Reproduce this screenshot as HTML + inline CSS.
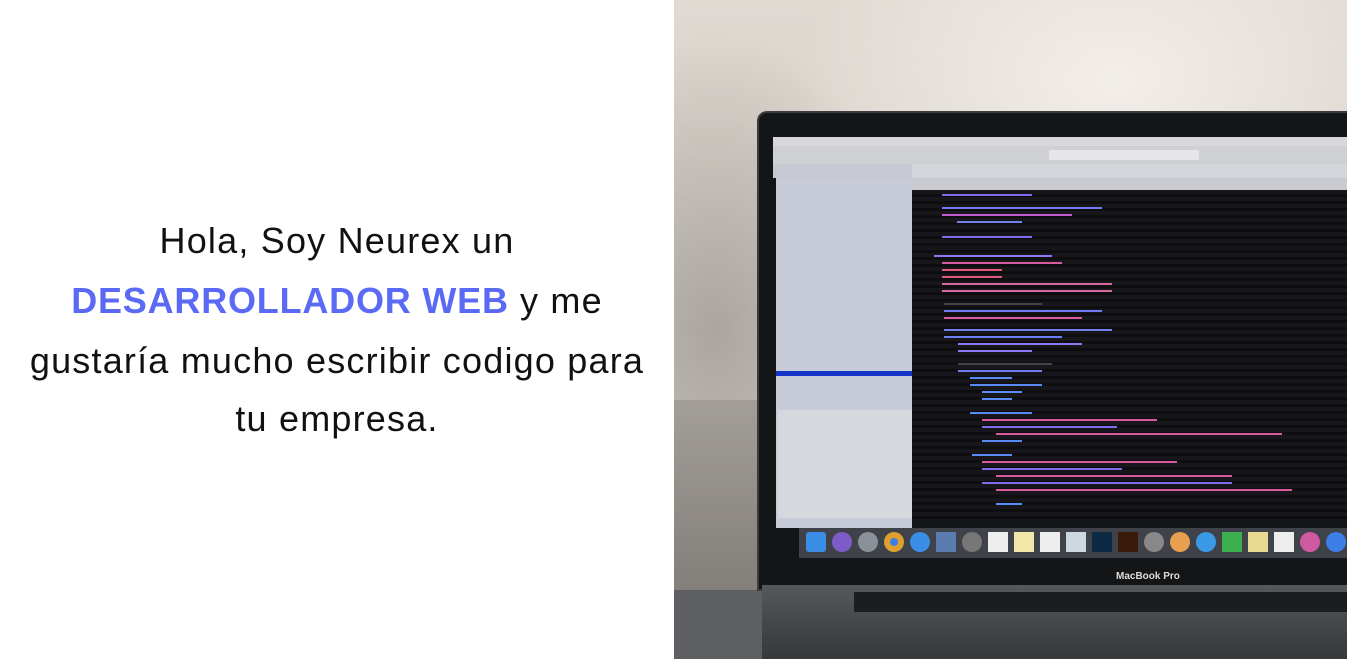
<!DOCTYPE html>
<html><head><meta charset="utf-8"><style>
*{margin:0;padding:0;box-sizing:border-box}
body{width:1347px;height:659px;overflow:hidden;background:#fff;position:relative;font-family:"Liberation Sans",sans-serif}
.left{position:absolute;left:0;top:0;width:674px;height:659px;background:#fff}
.t{position:absolute;left:0;width:674px;text-align:center;font-size:36px;color:#111;letter-spacing:1.2px;white-space:nowrap}
.b{color:#5b6af5;font-weight:bold;letter-spacing:0.8px}
.photo{position:absolute;left:674px;top:0;width:673px;height:659px;overflow:hidden;
background:radial-gradient(ellipse 320px 220px at 440px 80px,#f3eee9,transparent),
radial-gradient(ellipse 200px 300px at 40px 330px,#aaa59f,transparent),
linear-gradient(180deg,#e0d9d2 0%,#d5cec7 60%,#bdb7b1 100%)}
.abs{position:absolute}
</style></head><body>
<div class="left">
<div class="t" style="top:220px">Hola, Soy Neurex un</div>
<div class="t" style="top:280px"><span class="b">DESARROLLADOR WEB</span> y me</div>
<div class="t" style="top:340px">gustaría mucho escribir codigo para</div>
<div class="t" style="top:398px">tu empresa.</div>
</div>
<div class="photo">
<div class="abs" style="left:0;top:400px;width:90px;height:259px;background:linear-gradient(180deg,#a39e98,#77736f)"></div>
<div class="abs" style="left:0;top:590px;width:673px;height:69px;background:#5d5f62"></div>
<div class="abs" style="left:83px;top:111px;width:600px;height:480px;background:#141516;border-radius:10px 0 0 0;border:2px solid #3a3c3e"></div>
<div class="abs" style="left:88px;top:585px;width:600px;height:74px;background:linear-gradient(180deg,#55585c,#36383b)"></div>
<div class="abs" style="left:180px;top:592px;width:500px;height:20px;background:#1c1d1f"></div>
<div class="abs" style="left:442px;top:571px;font-size:10px;color:#ddd;font-weight:bold">MacBook Pro</div>
<div class="abs" style="left:99px;top:137px;width:574px;height:9px;background:#d8d8dc"></div>
<div class="abs" style="left:99px;top:146px;width:574px;height:18px;background:#cfd0d4"></div>
<div class="abs" style="left:375px;top:150px;width:150px;height:10px;background:#e6e6ea"></div>
<div class="abs" style="left:99px;top:164px;width:139px;height:14px;background:#c6c9d2"></div>
<div class="abs" style="left:238px;top:164px;width:435px;height:14px;background:#d3d5db"></div>
<div class="abs" style="left:102px;top:178px;width:136px;height:350px;background:#c8ccd8"></div>
<div class="abs" style="left:102px;top:371px;width:140px;height:5px;background:#1536c8"></div>
<div class="abs" style="left:104px;top:410px;width:138px;height:108px;background:#d6d8de"></div>
<div class="abs" style="left:238px;top:178px;width:435px;height:12px;background:#c9cbd1"></div>
<div class="abs" style="left:238px;top:190px;width:435px;height:330px;background:#17171b;
background-image:repeating-linear-gradient(180deg,transparent 0 4px,rgba(0,0,0,.4) 4px 7px);"></div>
<svg class="abs" style="left:238px;top:190px" width="435" height="330">
<g stroke-width="2">
<line x1="30" y1="5" x2="120" y2="5" stroke="#7b6cf0"/>
<line x1="30" y1="18" x2="190" y2="18" stroke="#6e7cf5"/>
<line x1="30" y1="25" x2="160" y2="25" stroke="#c55ad5"/>
<line x1="45" y1="32" x2="110" y2="32" stroke="#7482f0"/>
<line x1="30" y1="47" x2="120" y2="47" stroke="#7b6cf0"/>
<line x1="22" y1="66" x2="140" y2="66" stroke="#8a7af5"/>
<line x1="30" y1="73" x2="150" y2="73" stroke="#d85aa0"/>
<line x1="30" y1="80" x2="90" y2="80" stroke="#e05a7a"/>
<line x1="30" y1="87" x2="90" y2="87" stroke="#e05a7a"/>
<line x1="30" y1="94" x2="200" y2="94" stroke="#d46aa0"/>
<line x1="30" y1="101" x2="200" y2="101" stroke="#d46aa0"/>
<line x1="32" y1="114" x2="130" y2="114" stroke="#444"/>
<line x1="32" y1="121" x2="190" y2="121" stroke="#6e7cf5"/>
<line x1="32" y1="128" x2="170" y2="128" stroke="#d85aa0"/>
<line x1="32" y1="140" x2="200" y2="140" stroke="#7482f0"/>
<line x1="32" y1="147" x2="150" y2="147" stroke="#6e7cf5"/>
<line x1="46" y1="154" x2="170" y2="154" stroke="#8a7af5"/>
<line x1="46" y1="161" x2="120" y2="161" stroke="#8a7af5"/>
<line x1="46" y1="174" x2="140" y2="174" stroke="#444"/>
<line x1="46" y1="181" x2="130" y2="181" stroke="#6e7cf5"/>
<line x1="58" y1="188" x2="100" y2="188" stroke="#5a8af5"/>
<line x1="58" y1="195" x2="130" y2="195" stroke="#5a8af5"/>
<line x1="70" y1="202" x2="110" y2="202" stroke="#5a8af5"/>
<line x1="70" y1="209" x2="100" y2="209" stroke="#5a8af5"/>
<line x1="58" y1="223" x2="120" y2="223" stroke="#5a8af5"/>
<line x1="70" y1="230" x2="245" y2="230" stroke="#d85aa0"/>
<line x1="70" y1="237" x2="205" y2="237" stroke="#7b6cf0"/>
<line x1="84" y1="244" x2="370" y2="244" stroke="#d85aa0"/>
<line x1="70" y1="251" x2="110" y2="251" stroke="#5a8af5"/>
<line x1="60" y1="265" x2="100" y2="265" stroke="#5a8af5"/>
<line x1="70" y1="272" x2="265" y2="272" stroke="#d85aa0"/>
<line x1="70" y1="279" x2="210" y2="279" stroke="#7b6cf0"/>
<line x1="84" y1="286" x2="320" y2="286" stroke="#d85aa0"/>
<line x1="70" y1="293" x2="320" y2="293" stroke="#7b6cf0"/>
<line x1="84" y1="300" x2="380" y2="300" stroke="#d85aa0"/>
<line x1="84" y1="314" x2="110" y2="314" stroke="#5a8af5"/>
</g></svg>
<div class="abs" style="left:125px;top:528px;width:548px;height:30px;background:#3f4248"></div>
<svg class="abs" style="left:130px;top:530px" width="545" height="26">
<g>
<rect x="2" y="2" width="20" height="20" rx="3" fill="#3a8ee6"/>
<circle cx="38" cy="12" r="10" fill="#7e5cc8"/>
<circle cx="64" cy="12" r="10" fill="#8a9098"/>
<circle cx="90" cy="12" r="10" fill="#e0a030"/><circle cx="90" cy="12" r="4" fill="#3a7ee6"/>
<circle cx="116" cy="12" r="10" fill="#3a8ee6"/>
<rect x="132" y="2" width="20" height="20" fill="#5a7cb0"/>
<circle cx="168" cy="12" r="10" fill="#777"/>
<rect x="184" y="2" width="20" height="20" fill="#eee"/>
<rect x="210" y="2" width="20" height="20" fill="#f2e7a8"/>
<rect x="236" y="2" width="20" height="20" fill="#eee"/>
<rect x="262" y="2" width="20" height="20" fill="#ccd8e0"/>
<rect x="288" y="2" width="20" height="20" fill="#0c2a44"/>
<rect x="314" y="2" width="20" height="20" fill="#3a1a08"/>
<circle cx="350" cy="12" r="10" fill="#888"/>
<circle cx="376" cy="12" r="10" fill="#e8a050"/>
<circle cx="402" cy="12" r="10" fill="#3a9ae6"/>
<rect x="418" y="2" width="20" height="20" fill="#3ab050"/>
<rect x="444" y="2" width="20" height="20" fill="#e8d890"/>
<rect x="470" y="2" width="20" height="20" fill="#eee"/>
<circle cx="506" cy="12" r="10" fill="#d05aa0"/>
<circle cx="532" cy="12" r="10" fill="#3a7ee6"/>
</g></svg>
</div>
</body></html>
